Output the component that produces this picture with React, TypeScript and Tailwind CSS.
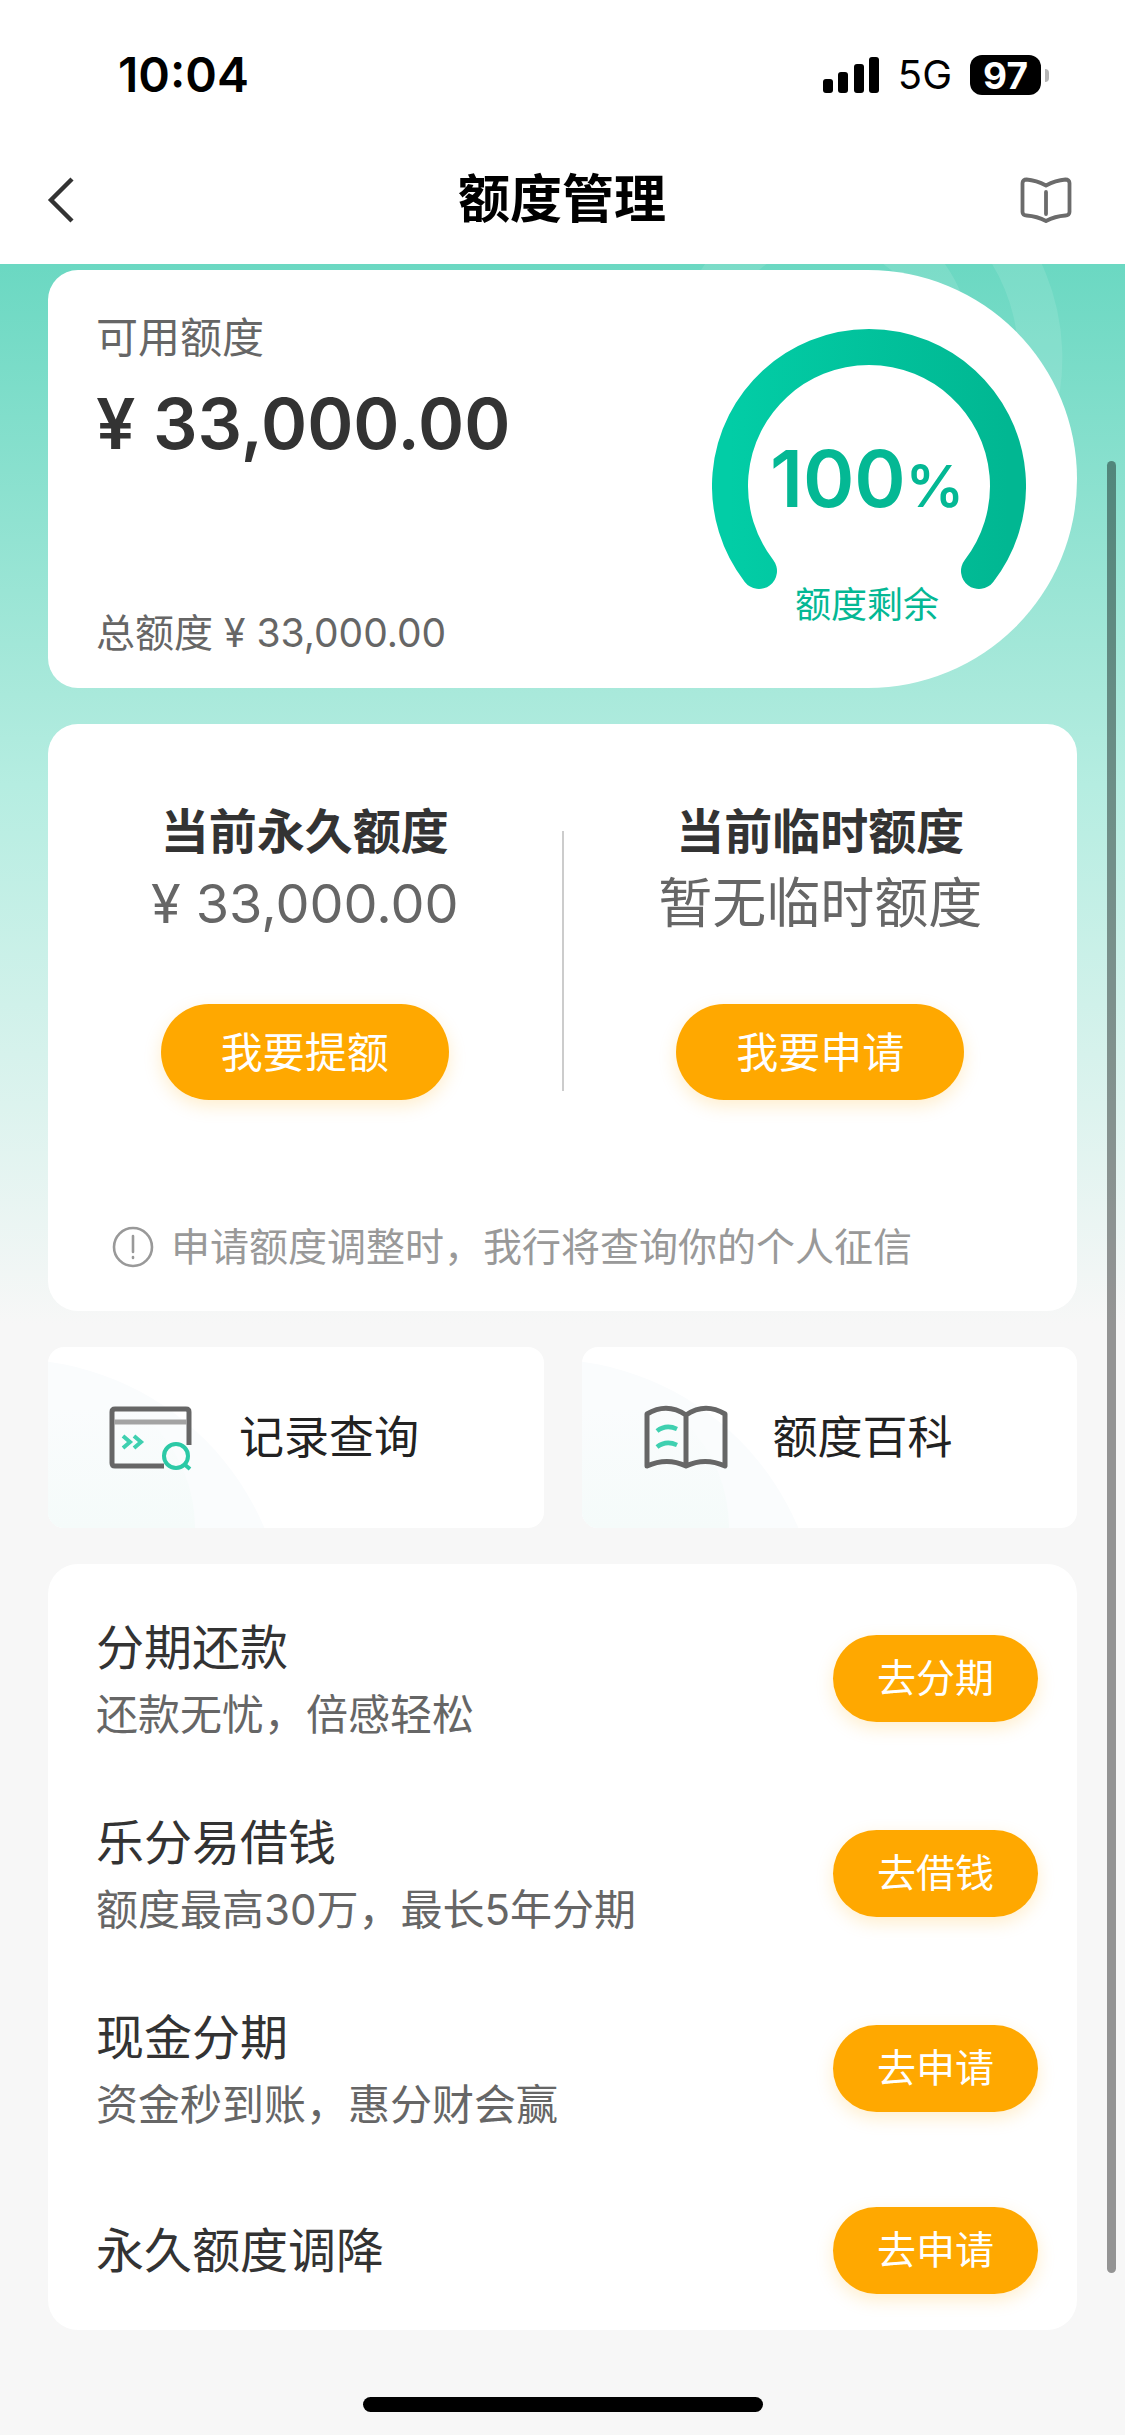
import React from "react";

const offers = [
  { title: "分期还款", note: "还款无忧，倍感轻松", action: "去分期" },
  { title: "乐分易借钱", note: "额度最高30万，最长5年分期", action: "去借钱" },
  { title: "现金分期", note: "资金秒到账，惠分财会赢", action: "去申请" },
];

function StatusBar() {
  return (
    <div className="flex h-[136px] items-center justify-between pt-[14px] pr-[76px] pl-[118px] text-black">
      <span className="text-[48px] leading-none font-semibold">10:04</span>
      <div className="flex items-center gap-[18px]">
        <svg className="h-[36px] w-[57px]" viewBox="0 0 57 36" aria-hidden="true">
          <rect x="0" y="22" width="10" height="14" rx="3" />
          <rect x="15" y="15" width="10" height="21" rx="3" />
          <rect x="31" y="7" width="10" height="29" rx="3" />
          <rect x="46" y="0" width="10" height="36" rx="3" />
        </svg>
        <span className="text-[40px] leading-none">5G</span>
        <div className="flex items-center gap-[4px]">
          <span className="flex h-[40px] w-[71px] items-center justify-center rounded-[12px] bg-black text-[37px] leading-none font-bold text-white">
            97
          </span>
          <span className="h-[13px] w-[4px] rounded-r-full bg-[#b5b5b5]" />
        </div>
      </div>
    </div>
  );
}

function NavBar() {
  return (
    <header className="grid h-32 grid-cols-[1fr_auto_1fr] items-center pr-[47px] pl-[46px]">
      <button type="button" aria-label="返回" className="justify-self-start">
        <svg className="h-[46px] w-[28px]" viewBox="0 0 28 46" fill="none" stroke="#333" strokeWidth="4.4">
          <path d="M26 2 5 23l21 21" />
        </svg>
      </button>
      <h1 className="text-[52px] leading-none font-bold text-black">额度管理</h1>
      <button type="button" aria-label="说明" className="justify-self-end">
        <svg className="h-[46px] w-[58px]" viewBox="0 0 58 46" fill="none" stroke="#6b6b6b" strokeWidth="3.8" strokeLinecap="round" strokeLinejoin="round">
          <path d="M26 8.500C19.500 5 12.500 3 6.500 2.500 4 2.500 2.500 4 2.500 6v29c0 2 1.500 3.500 4 3.500 7 .5 13 2 19.500 5.500 6.500-3.500 12.500-5 19.500-5.500 2.500 0 4-1.500 4-3.500V6c0-2-1.500-3.500-4-3.500C39.500 3 32.500 5 26 8.500Z" />
          <path d="M26 15v22" />
        </svg>
      </button>
    </header>
  );
}

function Gauge() {
  return (
    <div className="relative h-[314px] w-[314px]">
      <svg className="h-full w-full" viewBox="0 0 314 314" fill="none" aria-hidden="true">
        <defs>
          <linearGradient id="arc" x1="0" y1="0" x2="1" y2="0">
            <stop offset="0" stopColor="#02cda6" />
            <stop offset="1" stopColor="#01b792" />
          </linearGradient>
        </defs>
        <path d="M47 243A139 139 0 1 1 267 243" stroke="url(#arc)" strokeWidth="36" strokeLinecap="round" />
      </svg>
      <div className="absolute inset-0 flex flex-col items-center pt-[109px] pr-[4px] text-[#04b894]">
        <p className="text-[78px] leading-[84px] font-semibold whitespace-nowrap">
          100<span className="text-[58px]">%</span>
        </p>
        <p className="mt-[50px] text-[36px] leading-[54px]">额度剩余</p>
      </div>
    </div>
  );
}

function BalanceCard() {
  return (
    <section className="flex h-[418px] justify-between rounded-l-[30px] rounded-r-[209px] bg-white pr-[51px] pl-12">
      <div className="flex flex-col pt-[37px] pb-[25px] text-[#666]">
        <p className="text-[42px] leading-[62px]">可用额度</p>
        <p className="mt-[11px] text-[70px] leading-[88px] font-semibold text-[#333]">¥ 33,000.00</p>
        <p className="mt-auto text-[39px] leading-[60px]">总额度 ¥ 33,000.00</p>
      </div>
      <div className="pt-[58px]">
        <Gauge />
      </div>
    </section>
  );
}

function LimitColumn({ title, value, action }: { title: string; value: string; action: string }) {
  return (
    <div className="flex flex-1 flex-col items-center">
      <h2 className="text-[48px] leading-[72px] font-bold text-[#333]">{title}</h2>
      <p className="text-[54px] leading-[72px] text-[#666]">{value}</p>
      <button type="button" className="mt-[64px] h-24 w-72 rounded-full bg-[#ffa800] text-[42px] text-white shadow-[0_6px_18px_rgba(255,168,0,0.2)]">
        {action}
      </button>
    </div>
  );
}

function LimitsCard() {
  return (
    <section className="rounded-[30px] bg-white pt-[72px] pb-[34px]">
      <div className="flex">
        <LimitColumn title="当前永久额度" value="¥ 33,000.00" action="我要提额" />
        <div className="mt-[35px] mb-[9px] w-[2px] bg-[#ccc]" />
        <LimitColumn title="当前临时额度" value="暂无临时额度" action="我要申请" />
      </div>
      <p className="mt-[117px] flex items-center gap-[17px] pl-[64px] text-[39px] leading-[60px] text-[#999]">
        <svg className="h-[42px] w-[42px]" viewBox="0 0 42 42" fill="none" stroke="#999" strokeWidth="2.6" strokeLinecap="round" aria-hidden="true">
          <circle cx="21" cy="21" r="19" />
          <path d="M21 10v16M21 31v1" />
        </svg>
        申请额度调整时，我行将查询你的个人征信
      </p>
    </section>
  );
}

function RecordIcon() {
  return (
    <svg className="h-[72px] w-[90px]" viewBox="0 0 90 72" fill="none" strokeWidth="5" aria-hidden="true">
      <path d="M85 43V10q0-3-3-3H11q-3 0-3 3v51q0 3 3 3h49" stroke="#666" />
      <path d="M10 20h73" stroke="#a3a3a3" strokeWidth="5" />
      <path d="m19 34 7 6-7 6M30 34l7 6-7 6" stroke="#3fd0b0" strokeWidth="4" />
      <circle cx="72" cy="54" r="12" stroke="#2cc9a6" strokeWidth="4" />
      <path d="m80 62 6 5" stroke="#2cc9a6" strokeWidth="4" />
    </svg>
  );
}

function GuideIcon() {
  return (
    <svg className="h-[72px] w-[90px]" viewBox="0 0 90 72" fill="none" strokeWidth="5" strokeLinejoin="round" aria-hidden="true">
      <path d="M48 13Q29 0 9 12v52q20-9 39 0 19-9 39 0V12Q67 0 48 13v51" stroke="#666" />
      <path d="M19 29q9-7 20-2M19 45q9-7 20-2" stroke="#3fd0b0" strokeWidth="4.6" />
    </svg>
  );
}

function Tile({ label, icon }: { label: string; icon: React.ReactNode }) {
  return (
    <button type="button" className="relative flex h-[181px] flex-1 items-center gap-[45px] overflow-hidden rounded-[16px] bg-white pl-[56px] text-[45px] text-[#222]">
      <span className="absolute top-[12px] -left-[314px] size-[552px] rounded-full bg-[#fafcfd]" />
      <span className="absolute top-[31px] -left-[153px] size-[300px] rounded-full bg-[linear-gradient(#f5fbfa00_10%,#f5fbfa_50%)]" />
      <span className="relative">{icon}</span>
      <span className="relative">{label}</span>
    </button>
  );
}

function OfferButton({ children }: { children: React.ReactNode }) {
  return (
    <button type="button" className="h-[87px] w-[205px] rounded-full bg-[#ffa800] text-[39px] text-white shadow-[0_6px_18px_rgba(255,168,0,0.2)]">
      {children}
    </button>
  );
}

export default function App() {
  return (
    <div className="relative bg-[#f7f7f7] font-[Inter,'Noto_Sans_CJK_SC',sans-serif]">
      <div className="bg-white">
        <StatusBar />
        <NavBar />
      </div>
      <div className="relative overflow-hidden">
        <div className="absolute inset-x-0 top-0 h-[1060px] bg-[linear-gradient(#6bd8c2_0px,#a9e9db_430px,#b5ede1_520px,#f7f7f7_1060px)]">
          <svg className="absolute top-0 right-0 h-[320px] w-[525px]" viewBox="0 0 525 320" fill="none" stroke="#fff" strokeOpacity="0.11" strokeWidth="44" aria-hidden="true">
            <path d="M390 -40A204 204 0 0 1 400 216" />
            <circle cx="225" cy="85" r="125" />
          </svg>
        </div>
        <main className="relative flex flex-col gap-9 px-12 pt-[6px]">
          <BalanceCard />
          <LimitsCard />
          <div className="flex gap-[38px]">
            <Tile label="记录查询" icon={<RecordIcon />} />
            <Tile label="额度百科" icon={<GuideIcon />} />
          </div>
          <section className="rounded-[30px] bg-white pt-[17px] pr-[39px] pl-12">
            {offers.map((o) => (
              <div key={o.title} className="flex items-center justify-between py-[30px]">
                <div>
                  <h3 className="text-[48px] leading-[73px] text-[#333]">{o.title}</h3>
                  <p className="text-[42px] leading-[62px] text-[#666]">{o.note}</p>
                </div>
                <OfferButton>{o.action}</OfferButton>
              </div>
            ))}
            <div className="flex items-center justify-between pt-[41px] pb-9">
              <h3 className="text-[48px] leading-[73px] text-[#333]">永久额度调降</h3>
              <OfferButton>去申请</OfferButton>
            </div>
          </section>
        </main>
        <div className="flex h-[105px] justify-center pt-[67px]">
          <div className="h-[15px] w-[400px] rounded-full bg-black" />
        </div>
        <div className="absolute top-[197px] right-[9px] bottom-[162px] w-[9px] rounded-full bg-black/40" />
      </div>
    </div>
  );
}
